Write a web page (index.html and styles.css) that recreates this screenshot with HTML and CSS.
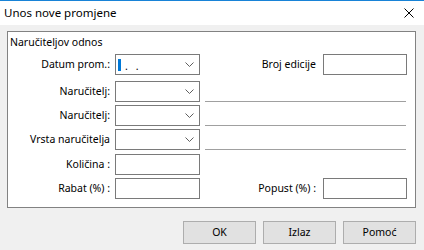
FILE: index.html
```html
<!DOCTYPE html>
<html>
<head>
<meta charset="utf-8">
<link rel="stylesheet" href="styles.css">
</head>
<body>
<div class="window">
  <div class="titlebar">
    <span class="title">Unos nove promjene</span>
    <svg class="close" width="10" height="10" viewBox="0 0 10 10"><path d="M0.5 0.5 L9.5 9.5 M9.5 0.5 L0.5 9.5" stroke="#000" stroke-width="1" fill="none"/></svg>
  </div>
  <div class="body">
    <div class="group">
      <div class="legend">Naručiteljov odnos</div>
      <div class="form">
        <div class="lbl">Datum prom.:</div>
        <div class="combo">
          <span class="caret"></span><span class="dot">.</span><span class="dot">.</span>
          <svg class="chev" width="9" height="5" viewBox="0 0 9 5"><polyline points="0.5,0.5 4.5,4.5 8.5,0.5" stroke="#5f5f5f" fill="none"/></svg>
        </div>
        <div class="right"><span class="rlbl">Broj edicije</span><div class="input"></div></div>

        <div class="lbl">Naručitelj:</div>
        <div class="combo">
          <svg class="chev" width="9" height="5" viewBox="0 0 9 5"><polyline points="0.5,0.5 4.5,4.5 8.5,0.5" stroke="#5f5f5f" fill="none"/></svg>
        </div>
        <div class="line"></div>

        <div class="lbl">Naručitelj:</div>
        <div class="combo">
          <svg class="chev" width="9" height="5" viewBox="0 0 9 5"><polyline points="0.5,0.5 4.5,4.5 8.5,0.5" stroke="#5f5f5f" fill="none"/></svg>
        </div>
        <div class="line"></div>

        <div class="lbl">Vrsta naručitelja</div>
        <div class="combo">
          <svg class="chev" width="9" height="5" viewBox="0 0 9 5"><polyline points="0.5,0.5 4.5,4.5 8.5,0.5" stroke="#5f5f5f" fill="none"/></svg>
        </div>
        <div class="line"></div>

        <div class="lbl">Količina :</div>
        <div class="input wide"></div>
        <div class="empty"></div>

        <div class="lbl">Rabat (%) :</div>
        <div class="input wide"></div>
        <div class="right"><span class="rlbl">Popust (%) :</span><div class="input"></div></div>
      </div>
    </div>
    <div class="buttons">
      <div class="btn">OK</div>
      <div class="btn">Izlaz</div>
      <div class="btn">Pomoć</div>
    </div>
  </div>
</div>
</body>
</html>
```

FILE: styles.css
```css
* { box-sizing: border-box; }
html, body {
  margin: 0;
  padding: 0;
  width: 424px;
  height: 250px;
  overflow: hidden;
  background: #f0f0f0;
  font-family: "Noto Sans", sans-serif;
  font-size: 10.5px;
  color: #000;
}
.window {
  width: 424px;
  height: 250px;
  background: #f0f0f0;
}
.titlebar {
  height: 25px;
  border-top: 1px solid #1883d7;
  background: #fff;
  display: flex;
  align-items: center;
  padding: 0 10px 0 4px;
}
.title {
  font-size: 11.5px;
  flex: 1;
  line-height: 14px;
  padding-bottom: 1px;
}
.close { display: block; }
.body {
  padding: 6px 8px 0 7px;
}
.group {
  height: 177px;
  background: #fff;
  border: 1px solid #828282;
}
.legend {
  height: 22px;
  padding: 3px 0 0 2px;
  line-height: 14px;
}
.form {
  display: grid;
  grid-template-columns: 102px 85px 202px;
  grid-template-rows: 24px 21px 21px 22px 21px 21px;
  column-gap: 5px;
  row-gap: 3px;
  align-items: start;
}
.lbl {
  height: 21px;
  display: flex;
  align-items: center;
  justify-content: flex-end;
  white-space: nowrap;
  padding-bottom: 1px;
}
.combo, .input {
  height: 21px;
  border: 1px solid #7a7a7a;
  background: #fff;
}
.combo {
  width: 85px;
  display: flex;
  align-items: center;
  padding-left: 2px;
}
.input { width: 84px; }
.input.wide { width: 85px; }
.caret {
  width: 3px;
  height: 12px;
  background: #0078d7;
  margin-right: 4px;
}
.dot {
  line-height: 12px;
  margin-right: 8px;
  position: relative;
  top: 1px;
}
.chev {
  display: block;
  margin-left: auto;
  margin-right: 5px;
}
.right {
  height: 21px;
  display: flex;
  align-items: center;
  justify-content: flex-end;
  gap: 7px;
}
.rlbl {
  white-space: nowrap;
  padding-bottom: 1px;
}
.line {
  height: 21px;
  width: 201px;
  border-bottom: 1px solid #a0a0a0;
}
.empty { height: 21px; }
.buttons {
  display: flex;
  justify-content: flex-end;
  gap: 7px;
  margin-top: 13px;
}
.btn {
  width: 73px;
  height: 23px;
  background: #e1e1e1;
  border: 1px solid #adadad;
  display: flex;
  align-items: center;
  justify-content: center;
  padding-bottom: 1px;
}
```
